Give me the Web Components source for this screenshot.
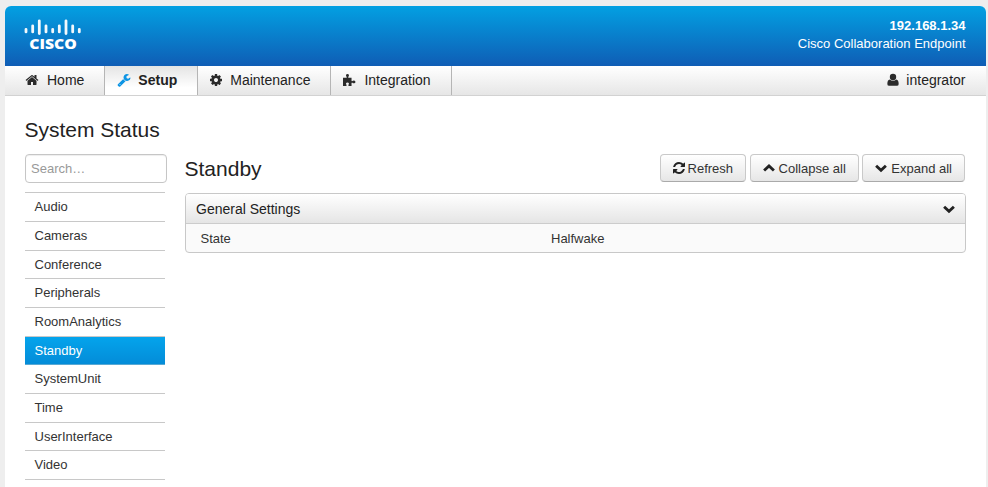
<!DOCTYPE html>
<html lang="en">
<head>
<meta charset="utf-8">
<title>System Status</title>
<style>
html{background:#eee}
body{margin:0;font-family:"Liberation Sans",Arial,sans-serif;font-size:13px;color:#333;background:#eee;height:487px;overflow:hidden}
</style>
</head>
<body>
<status-app></status-app>
<script>
const ICONS = {
  home: '<path d="M1472 992v480q0 26-19 45t-45 19h-384v-384h-256v384h-384q-26 0-45-19t-19-45v-480q0-1 .5-3t.5-3l575-474 575 474q1 2 1 6zm223-69l-62 74q-8 9-21 11h-3q-13 0-21-7l-692-577-692 577q-12 8-24 7-13-2-21-11l-62-74q-8-10-7-23.5t11-21.5l719-599q32-26 76-26t76 26l244 204v-195q0-14 9-23t23-9h192q14 0 23 9t9 23v408l219 182q10 8 11 21.5t-7 23.5z"/>',
  wrench: '<path d="M448 1472q0-26-19-45t-45-19-45 19-19 45 19 45 45 19 45-19 19-45zm644-420l-682 682q-37 37-90 37-52 0-91-37l-106-108q-38-36-38-90 0-53 38-91l681-681q39 98 114.5 173.5t173.5 114.5zm634-435q0 39-23 106-47 134-164.5 217.5t-258.5 83.5q-185 0-316.5-131.5t-131.5-316.5 131.5-316.5 316.5-131.5q58 0 121.5 16.5t107.5 46.5q16 11 16 28t-16 28l-293 169v224l193 107q5-3 79-48.5t135.5-81 70.5-35.5q15 0 23.5 10t8.5 25z"/>',
  cog: '<path d="M1152 896q0-106-75-181t-181-75-181 75-75 181 75 181 181 75 181-75 75-181zm512-109v222q0 12-8 23t-20 13l-185 28q-19 54-39 91 35 50 107 138 10 12 10 25t-9 23q-27 37-99 108t-94 71q-12 0-26-9l-138-108q-44 23-91 38-16 136-29 186-7 28-36 28h-222q-14 0-24.5-8.5t-11.5-21.5l-28-184q-49-16-90-37l-141 107q-10 9-25 9-14 0-25-11-126-114-165-168-7-10-7-23 0-12 8-23 15-21 51-66.5t54-70.5q-27-50-41-99l-183-27q-13-2-21-12.5t-8-23.5v-222q0-12 8-23t19-13l186-28q14-46 39-92-40-57-107-138-10-12-10-24 0-10 9-23 26-36 98.5-107.5t94.5-71.5q13 0 26 10l138 107q44-23 91-38 16-136 29-186 7-28 36-28h222q14 0 24.5 8.5t11.5 21.5l28 184q49 16 90 37l142-107q9-9 24-9 13 0 25 10 129 119 165 170 7 8 7 22 0 12-8 23-15 21-51 66.5t-54 70.5q26 50 41 98l183 28q13 2 21 12.5t8 23.5z"/>',
  puzzle: '<path d="M128 600H560Q640 590 600 500Q500 420 510 300Q530 130 700 130Q870 130 890 300Q900 420 800 500Q760 590 840 600H1220V990Q1250 1080 1330 1030Q1430 950 1540 970Q1720 1000 1720 1140Q1720 1280 1540 1310Q1430 1330 1330 1240Q1250 1200 1220 1290V1664H850Q790 1600 830 1500Q910 1400 880 1310Q840 1200 700 1200Q560 1200 520 1310Q490 1400 570 1500Q610 1600 550 1664H128Z"/>',
  user: '<circle cx="896" cy="520" r="410"/><path d="M480 820q170 170 416 170t416-170q310 60 310 580 0 240-240 240H410q-240 0-240-240 0-520 310-580z"/>',
  refresh: '<path d="M1639 1056q0 5-1 7-64 268-268 434.5t-478 166.5q-146 0-282.5-55t-243.5-157l-129 129q-19 19-45 19t-45-19-19-45v-448q0-26 19-45t45-19h448q26 0 45 19t19 45-19 45l-137 137q71 66 161 102t187 36q134 0 250-65t186-179q11-17 53-117 8-23 30-23h192q13 0 22.5 9.5t9.5 22.5zm25-800v448q0 26-19 45t-45 19h-448q-26 0-45-19t-19-45 19-45l138-138q-148-137-349-137-134 0-250 65t-186 179q-11 17-53 117-8 23-30 23h-199q-13 0-22.5-9.5t-9.5-22.5v-7q65-268 270-434.5t480-166.5q146 0 284 55.5t245 156.5l130-129q19-19 45-19t45 19 19 45z"/>',
  up: '<path d="M270 1220L896 640L1522 1220" fill="none" stroke="currentColor" stroke-width="370"/>',
  down: '<path d="M270 600L896 1180L1522 600" fill="none" stroke="currentColor" stroke-width="370"/>'
};

function define(name, html, setup) {
  const tpl = document.createElement('template');
  tpl.innerHTML = html;
  customElements.define(name, class extends HTMLElement {
    constructor() {
      super();
      this.attachShadow({ mode: 'open' }).append(tpl.content.cloneNode(true));
    }
    connectedCallback() { if (setup) setup(this, this.shadowRoot); }
  });
}

define('ui-icon', `<style>
:host{display:block;flex:none;width:14px;height:14px}
svg{display:block;width:100%;height:100%;fill:currentColor;overflow:visible}
</style><svg viewBox="0 0 1792 1792"></svg>`,
(el, root) => {
  const svg = root.querySelector('svg');
  if (el.hasAttribute('tight')) svg.setAttribute('viewBox', '128 128 1536 1536');
  svg.innerHTML = ICONS[el.getAttribute('name')] || svg.innerHTML;
});

define('cisco-logo', `<style>
:host{display:block;width:60px;height:38px}
svg{display:block}
text{font:800 14.5px "Open Sans",sans-serif;fill:#fff}
</style>
<svg width="60" height="38" viewBox="0 0 60 38">
<g stroke="#fff" stroke-width="2.8" stroke-linecap="round" opacity=".95">
<path d="M2 12.3v2.6M8.7 8.8v6.1M15.3 3.8v12.8M22 8.8v6.1M28.7 12.3v2.6M35.3 8.8v6.1M42 3.8v12.8M48.7 8.8v6.1M55.3 12.3v2.6"/>
</g>
<text x="5.2" y="32.2" textLength="47.6" lengthAdjust="spacingAndGlyphs">CISCO</text>
</svg>`);

define('app-header', `<style>
:host{display:flex;box-sizing:border-box;height:60px;padding:11px 20.5px 0 19px;justify-content:space-between;border-radius:6px 6px 0 0;background:linear-gradient(#03a0e2,#0f5db5);color:#fff}
.info{text-align:right;line-height:18px}
b{display:block}
</style><cisco-logo></cisco-logo><div class="info"><b>192.168.1.34</b>Cisco Collaboration Endpoint</div>`);

define('nav-item', `<style>
:host{display:flex;box-sizing:border-box;align-items:center;gap:7px;padding:0 20px 2px 11px;border-right:1px solid #b5b5b5;font-size:14px;color:#222}
:host([active]){background:linear-gradient(#e4e4e4,#fff 75%);font-weight:bold;padding-left:12px}
:host([active]) ui-icon{color:#0c94e4}
ui-icon{color:#2b2b2b}
:host([last]){margin-left:auto;border:0;padding-right:20.5px;gap:6px}
:host([first]){padding-left:20px;gap:8px}
:host([icon=puzzle]){gap:8px}
</style><ui-icon></ui-icon><slot></slot>`,
(el, root) => {
  root.querySelector('ui-icon').shadowRoot.querySelector('svg').innerHTML = ICONS[el.getAttribute('icon')];
});

define('nav-bar', `<style>
:host{display:flex;box-sizing:border-box;height:30px;border-bottom:1px solid #d2d2d2;background:linear-gradient(#fff,#e6e6e6)}
</style><slot></slot>`);

define('search-box', `<style>
:host{display:block}
input{display:block;box-sizing:border-box;width:142px;height:29px;border:1px solid #c6c6c6;border-radius:4px;padding:0 5px;font:13px "Liberation Sans",Arial,sans-serif;background:#fff;box-shadow:inset 0 1px 1px rgba(0,0,0,.07);outline:0}
input::placeholder{color:#999;opacity:1}
</style><input placeholder="Search…" aria-label="Search">`);

define('menu-item', `<style>
:host{display:block;box-sizing:border-box;height:28.7px;padding-left:9.5px;line-height:28px;border-bottom:1px solid #c8c8c8}
:host([active]){color:#fff;background:linear-gradient(#04a4ec,#048cd8);border-bottom-color:#58a9d4}
</style><slot></slot>`);

define('side-menu', `<style>
:host{display:block;margin-top:9.3px;border-top:1px solid #c8c8c8;width:140px}
</style><slot></slot>`);

define('ui-button', `<style>
:host{display:flex;box-sizing:border-box;height:28px;align-items:center;gap:4px;padding:0 12px;border:1px solid #c9c9c9;border-bottom-color:#aaa;border-radius:4px;background:linear-gradient(#fff,#e6e6e6);white-space:nowrap}
:host([icon=refresh]){gap:3px}
ui-icon{width:12px;height:12px;color:#222}
</style><ui-icon tight></ui-icon><slot></slot>`,
(el, root) => {
  root.querySelector('ui-icon').shadowRoot.querySelector('svg').innerHTML = ICONS[el.getAttribute('icon')];
});

define('settings-panel', `<style>
:host{display:block;box-sizing:border-box;height:60px;border:1px solid #c8c8c8;border-radius:4px;background:#fafafa;overflow:hidden}
header{display:flex;box-sizing:border-box;height:30px;align-items:center;justify-content:space-between;padding:0 9px 0 10px;border-bottom:1px solid #ccc;font-size:14px;color:#222;background:linear-gradient(#fff,#e5e5e5)}
</style><header><slot name="title"></slot><ui-icon name="down"></ui-icon></header><slot></slot>`);

define('setting-row', `<style>
:host{display:grid;grid-template-columns:350.5px 1fr;padding-left:14.5px;line-height:29px}
</style><slot name="key"></slot><slot name="value"></slot>`);

define('status-app', `<style>
:host{display:block;box-sizing:border-box;margin:0 2px 0 5px;padding-top:6px;height:487px}
.sheet{height:481px;background:#fff;border-radius:6px 6px 0 0}
h1,h2{margin:0;font-weight:normal;font-size:21px;line-height:28px;color:#222}
main{padding:20px 20px 0 20px}
h1{height:38px;margin-left:-.6px}
.cols{display:grid;grid-template-columns:142px 1fr;gap:18px}
.top{display:flex;gap:3.5px;height:39px;align-items:flex-start;padding-right:1px}
.top h2{flex:1;margin-left:-.5px;line-height:30px}
</style>
<div class="sheet">
<app-header></app-header>
<nav-bar>
<nav-item icon="home" first>Home</nav-item>
<nav-item icon="wrench" active>Setup</nav-item>
<nav-item icon="cog">Maintenance</nav-item>
<nav-item icon="puzzle">Integration</nav-item>
<nav-item icon="user" last>integrator</nav-item>
</nav-bar>
<main>
<h1>System Status</h1>
<div class="cols">
<aside>
<search-box></search-box>
<side-menu>
<menu-item>Audio</menu-item><menu-item>Cameras</menu-item><menu-item>Conference</menu-item><menu-item>Peripherals</menu-item><menu-item>RoomAnalytics</menu-item><menu-item active>Standby</menu-item><menu-item>SystemUnit</menu-item><menu-item>Time</menu-item><menu-item>UserInterface</menu-item><menu-item>Video</menu-item>
</side-menu>
</aside>
<section>
<div class="top"><h2>Standby</h2>
<ui-button icon="refresh">Refresh</ui-button><ui-button icon="up">Collapse all</ui-button><ui-button icon="down">Expand all</ui-button></div>
<settings-panel><span slot="title">General Settings</span>
<setting-row><span slot="key">State</span><span slot="value">Halfwake</span></setting-row></settings-panel>
</section>
</div>
</main>
</div>`);
</script>
</body>
</html>
